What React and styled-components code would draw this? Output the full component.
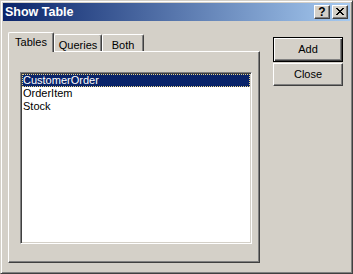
import React from 'react';
import styled, { createGlobalStyle } from 'styled-components';

const GlobalStyle = createGlobalStyle`
  html, body {
    margin: 0;
    padding: 0;
    background: #d4d0c8;
  }
  * {
    box-sizing: border-box;
  }
`;

// Classic Windows 2000 dialog frame
const Window = styled.div`
  width: 353px;
  height: 274px;
  background: #d4d0c8;
  border: 1px solid;
  border-color: #d4d0c8 #404040 #404040 #d4d0c8;
  box-shadow: inset 1px 1px #ffffff, inset -1px -1px #808080;
  padding: 2px;
  font-family: "Liberation Sans", Arial, sans-serif;
  font-size: 11px;
  color: #000;
  display: flex;
  flex-direction: column;
`;

const TitleBar = styled.div`
  height: 18px;
  display: flex;
  align-items: center;
  justify-content: space-between;
  padding: 0 2px 0 2px;
  background: linear-gradient(to right, #0a246a, #a6caf0);
`;

const Title = styled.span`
  color: #fff;
  font-weight: bold;
  font-size: 12.5px;
`;

const CaptionButtons = styled.div`
  display: flex;
  gap: 2px;
`;

const CaptionButton = styled.div`
  width: 16px;
  height: 14px;
  background: #d4d0c8;
  border: 1px solid;
  border-color: #ffffff #404040 #404040 #ffffff;
  box-shadow: inset -1px -1px #808080;
  display: flex;
  align-items: center;
  justify-content: center;
  font-weight: bold;
  font-size: 12px;
  line-height: 1;
  padding-bottom: 1px;
`;

const Main = styled.div`
  display: flex;
  padding: 11px 0 0 5px;
`;

const TabArea = styled.div`
  width: 252px;
  display: flex;
  flex-direction: column;
`;

const TabRow = styled.div`
  display: flex;
  align-items: flex-end;
  height: 20px;
`;

const Tab = styled.div`
  position: relative;
  z-index: ${p => (p.$active ? 2 : 0)};
  width: ${p => p.$w}px;
  height: ${p => (p.$active ? 20 : 18)}px;
  background: #d4d0c8;
  border-top: 1px solid #fff;
  border-left: 1px solid #fff;
  border-right: 1px solid #404040;
  border-radius: 2px 2px 0 0;
  box-shadow: inset -1px 0 #808080;
  display: flex;
  justify-content: center;
  padding-top: ${p => (p.$active ? 3 : 4)}px;
  line-height: 13px;
`;

const Panel = styled.div`
  position: relative;
  z-index: 1;
  margin-top: -1px;
  width: 252px;
  height: 212px;
  background: #d4d0c8;
  border: 1px solid;
  border-color: #ffffff #404040 #404040 #ffffff;
  box-shadow: inset -1px -1px #808080;
  padding: 20px 0 0 11px;
`;

const ListBox = styled.div`
  width: 232px;
  height: 172px;
  background: #fff;
  border: 1px solid;
  border-color: #808080 #ffffff #ffffff #808080;
  box-shadow: inset 1px 1px #404040, inset -1px -1px #d4d0c8;
  padding: 1px;
`;

const ListItem = styled.div`
  height: 13px;
  line-height: 13px;
  padding-left: 1px;
  white-space: nowrap;
  background: ${p => (p.$selected ? '#0a246a' : 'transparent')};
  color: ${p => (p.$selected ? '#fff' : '#000')};
  outline: ${p => (p.$selected ? '1px dotted #e8d58a' : 'none')};
  outline-offset: -1px;
`;

const ButtonColumn = styled.div`
  margin-left: 13px;
  padding-top: 5px;
  display: flex;
  flex-direction: column;
  gap: 1px;
`;

const Button = styled.div`
  width: 70px;
  height: ${p => (p.$default ? 25 : 23)}px;
  background: #d4d0c8;
  border: 1px solid;
  border-color: ${p => (p.$default ? '#000' : '#ffffff #404040 #404040 #ffffff')};
  box-shadow: ${p =>
    p.$default
      ? 'inset 1px 1px #ffffff, inset -1px -1px #404040, inset -2px -2px #808080'
      : 'inset -1px -1px #808080'};
  display: flex;
  align-items: center;
  justify-content: center;
  padding-bottom: 1px;
`;

const CloseGlyph = () => (
  <svg width="8" height="7" viewBox="0 0 8 7" shapeRendering="crispEdges">
    <path
      d="M0 0h2v1H0zM6 0h2v1H6zM1 1h2v1H1zM5 1h2v1H5zM2 2h4v1H2zM3 3h2v1H3zM2 4h4v1H2zM1 5h2v1H1zM5 5h2v1H5zM0 6h2v1H0zM6 6h2v1H6z"
      fill="#000"
    />
  </svg>
);

const tables = ['CustomerOrder', 'OrderItem', 'Stock'];

const App = () => {
  return (
    <>
      <GlobalStyle />
      <Window>
        <TitleBar>
          <Title>Show Table</Title>
          <CaptionButtons>
            <CaptionButton>?</CaptionButton>
            <CaptionButton>
              <CloseGlyph />
            </CaptionButton>
          </CaptionButtons>
        </TitleBar>
        <Main>
          <TabArea>
            <TabRow>
              <Tab $active $w={46}>Tables</Tab>
              <Tab $w={48}>Queries</Tab>
              <Tab $w={42}>Both</Tab>
            </TabRow>
            <Panel>
              <ListBox>
                {tables.map((t, i) => (
                  <ListItem key={t} $selected={i === 0}>
                    {t}
                  </ListItem>
                ))}
              </ListBox>
            </Panel>
          </TabArea>
          <ButtonColumn>
            <Button $default>Add</Button>
            <Button>Close</Button>
          </ButtonColumn>
        </Main>
      </Window>
    </>
  );
};

export default App;
